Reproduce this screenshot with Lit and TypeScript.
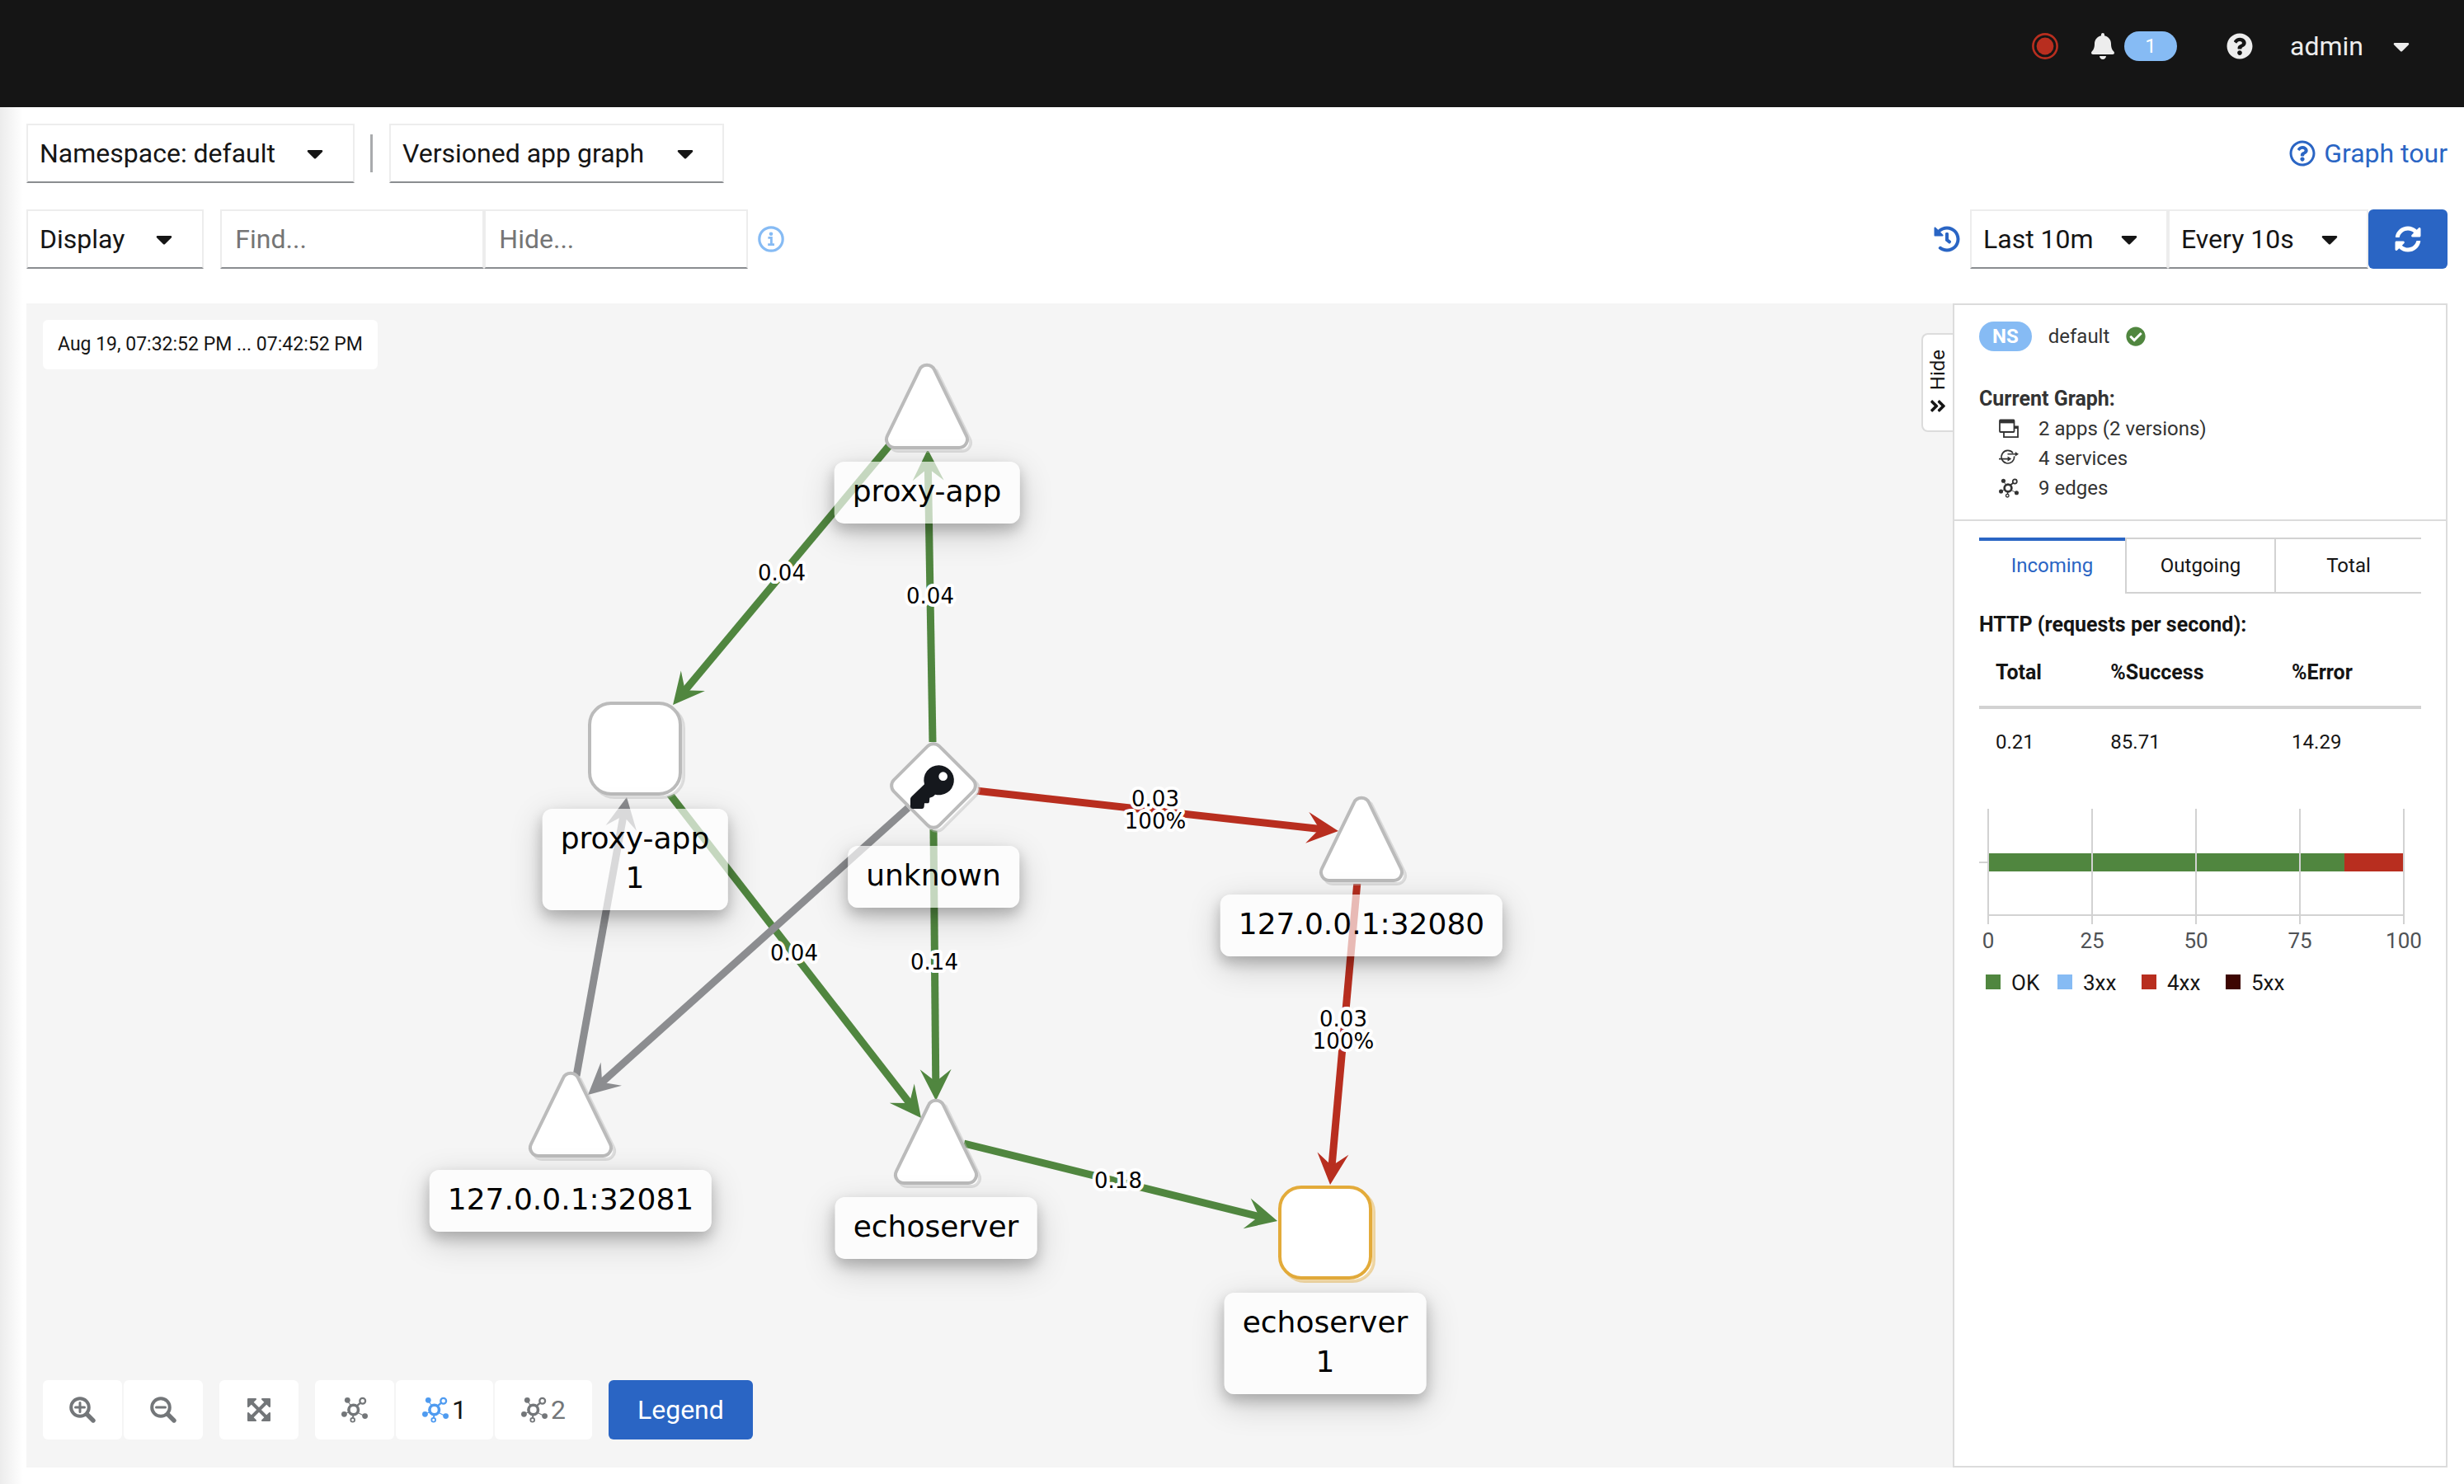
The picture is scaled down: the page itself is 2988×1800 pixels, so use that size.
import { LitElement, html, svg, css, nothing } from "lit";
import { customElement } from "lit/decorators.js";
import { styleMap } from "lit/directives/style-map.js";
import { classMap } from "lit/directives/class-map.js";

type Pt = [number, number];

const GREEN = "#50863f";
const RED = "#b82e1f";
const GRAY = "#8c8d90";

const CARET = "M31.3 192h257.3c17.8 0 26.7 21.5 14.1 34.1L174.1 354.8c-7.8 7.8-20.5 7.8-28.3 0L17.2 226.1C4.6 213.5 13.5 192 31.3 192z";
const BELL = "M224 512c35.32 0 63.97-28.65 63.97-64H160.03c0 35.35 28.65 64 63.97 64zm215.39-149.71c-19.32-20.76-55.47-51.99-55.47-154.29 0-77.7-54.48-139.9-127.94-155.16V32c0-17.67-14.32-32-31.98-32s-31.98 14.33-31.98 32v20.84C118.56 68.1 64.08 130.3 64.08 208c0 102.3-36.15 133.53-55.47 154.29-6 6.45-8.66 14.16-8.61 21.71.11 16.4 12.98 32 32.1 32h383.8c19.12 0 32-15.6 32.1-32 .05-7.55-2.61-15.27-8.61-21.71z";
const HELP = "M504 256c0 136.997-111.043 248-248 248S8 392.997 8 256C8 119.083 119.043 8 256 8s248 111.083 248 248zM262.655 90c-54.497 0-89.255 22.957-116.549 63.758-3.536 5.286-2.353 12.415 2.715 16.258l34.699 26.31c5.205 3.947 12.621 3.008 16.665-2.122 17.864-22.658 30.113-35.797 57.303-35.797 20.429 0 45.698 13.148 45.698 32.958 0 14.976-12.363 22.667-32.534 33.976C247.128 238.528 216 254.941 216 296v4c0 6.627 5.373 12 12 12h56c6.627 0 12-5.373 12-12v-1.333c0-28.462 83.186-29.647 83.186-106.667 0-58.002-60.165-102-116.531-102zM256 338c-25.365 0-46 20.635-46 46 0 25.364 20.635 46 46 46s46-20.636 46-46c0-25.365-20.635-46-46-46z";
const HELP_OUTLINE = "M256 8C119.043 8 8 119.083 8 256c0 136.997 111.043 248 248 248s248-111.003 248-248C504 119.083 392.957 8 256 8zm0 448c-110.532 0-200-89.431-200-200 0-110.495 89.472-200 200-200 110.491 0 200 89.471 200 200 0 110.53-89.431 200-200 200zm107.244-255.2c0 67.052-72.421 68.084-72.421 92.863V300c0 6.627-5.373 12-12 12h-45.647c-6.627 0-12-5.373-12-12v-8.659c0-35.745 27.1-50.034 47.579-61.516 17.561-9.845 28.324-16.541 28.324-29.579 0-17.246-21.999-28.693-39.784-28.693-23.189 0-33.894 10.977-48.942 29.969-4.057 5.12-11.46 6.071-16.666 2.124l-27.824-21.098c-5.107-3.872-6.251-11.066-2.644-16.363C184.846 131.491 214.94 112 261.794 112c49.071 0 101.45 38.304 101.45 88.8zM298 368c0 23.159-18.841 42-42 42s-42-18.841-42-42 18.841-42 42-42 42 18.841 42 42z";
const HISTORY = "M504 255.531c.253 136.64-111.18 248.372-247.82 248.468-59.015.042-113.223-20.53-155.822-54.911-11.077-8.94-11.905-25.541-1.839-35.607l11.267-11.267c8.609-8.609 22.353-9.551 31.891-1.984C173.062 425.135 212.781 440 256 440c101.705 0 184-82.311 184-184 0-101.705-82.311-184-184-184-48.814 0-93.149 18.969-126.068 49.932l50.754 50.754c10.08 10.08 2.941 27.314-11.313 27.314H24c-8.837 0-16-7.163-16-16V38.627c0-14.254 17.234-21.393 27.314-11.314l49.372 49.372C129.209 34.136 189.552 8 256 8c136.81 0 247.747 110.78 248 247.531zm-180.912 78.784l9.823-12.63c8.138-10.463 6.253-25.542-4.21-33.679L288 256.349V152c0-13.255-10.745-24-24-24h-16c-13.255 0-24 10.745-24 24v135.651l65.409 50.874c10.463 8.137 25.541 6.253 33.679-4.21z";
const SYNC = "M370.72 133.28C339.458 104.008 298.888 87.962 255.848 88c-77.458.068-144.328 53.178-162.791 126.85-1.344 5.363-6.122 9.15-11.651 9.15H24.103c-7.498 0-13.194-6.807-11.807-14.176C33.933 94.924 134.813 8 256 8c66.448 0 126.791 26.136 171.315 68.685L463.03 40.97C478.149 25.851 504 36.559 504 57.941V192c0 13.255-10.745 24-24 24H345.941c-21.382 0-32.09-25.851-16.971-40.971l41.75-41.749zM32 296h134.059c21.382 0 32.09 25.851 16.971 40.971l-41.75 41.75c31.262 29.273 71.835 45.319 114.876 45.28 77.418-.07 144.315-53.144 162.787-126.849 1.344-5.363 6.122-9.15 11.651-9.15h57.304c7.498 0 13.194 6.807 11.807 14.176C478.067 417.076 377.187 504 256 504c-66.448 0-126.791-26.136-171.315-68.685L48.97 471.03C33.851 486.149 8 475.441 8 454.059V320c0-13.255 10.745-24 24-24z";
const CHECK = "M504 256c0 136.967-111.033 248-248 248S8 392.967 8 256 119.033 8 256 8s248 111.033 248 248zM227.314 387.314l184-184c6.248-6.248 6.248-16.379 0-22.627l-22.627-22.627c-6.248-6.249-16.379-6.249-22.628 0L216 308.118l-70.059-70.059c-6.248-6.248-16.379-6.248-22.628 0l-22.627 22.627c-6.248 6.248-6.248 16.379 0 22.627l104 104c6.249 6.249 16.379 6.249 22.628.001z";
const DOUBLE_RIGHT = "M224.3 273l-136 136c-9.4 9.4-24.6 9.4-33.9 0l-22.6-22.6c-9.4-9.4-9.4-24.6 0-33.9l96.4-96.4-96.4-96.4c-9.4-9.4-9.4-24.6 0-33.9L54.3 103c9.4-9.4 24.6-9.4 33.9 0l136 136c9.5 9.4 9.5 24.6.1 34zm192-34l-136-136c-9.4-9.4-24.6-9.4-33.9 0l-22.6 22.6c-9.4 9.4-9.4 24.6 0 33.9l96.4 96.4-96.4 96.4c-9.4 9.4-9.4 24.6 0 33.9l22.6 22.6c9.4 9.4 24.6 9.4 33.9 0l136-136c9.4-9.2 9.4-24.4 0-33.8z";

const glyph = (d: string, w: number, px: number, h = 512) => html`
  <svg class="icon" aria-hidden="true" width=${px} height=${Math.round((px * h) / w)} viewBox="0 0 ${w} ${h}"><path d=${d} fill="currentColor" /></svg>`;

const caret = () => glyph(CARET, 320, 20);

const topology = (px: number) => html`
  <svg class="icon" aria-hidden="true" width=${px} height=${px} viewBox="0 0 32 32" fill="none" stroke="currentColor">
    <circle cx="14.7" cy="16" r="5.8" stroke-width="3.6" />
    <path d="M18.6 11.4 23.4 7.4" stroke-width="2.4" />
    <path d="M20 19.4 28 23.4M9.6 18.4 3.2 21.3M11.4 11 7.3 4.6" stroke-width="1.1" />
    <path d="M14.4 22 14 25.4" stroke-width="2" />
    <circle cx="25.7" cy="5.3" r="3.4" stroke-width="2.3" />
    <circle cx="13.7" cy="28.2" r="2.4" stroke-width="1.8" />
    <g fill="currentColor" stroke="none">
      <circle cx="7.3" cy="4.3" r="3.4" />
      <circle cx="3.4" cy="21.3" r="3.4" />
      <circle cx="28.6" cy="23.6" r="3.4" />
    </g>
  </svg>`;

const magnifier = (plus: boolean) => html`
  <svg class="icon" aria-hidden="true" width="32" height="32" viewBox="0 0 32 32" fill="none" stroke="currentColor">
    <circle cx="13" cy="13" r="10.8" stroke-width="4" />
    <path d="M21.5 21.5 29 29" stroke-width="5.4" stroke-linecap="round" />
    <path d=${plus ? "M7.5 13h11M13 7.5v11" : "M7.5 13h11"} stroke-width="3" stroke-linecap="round" />
  </svg>`;

const expand = html`
  <svg class="icon" aria-hidden="true" width="28" height="28" viewBox="0 0 28 28" fill="currentColor" stroke="currentColor">
    <path d="M4 4 24 24M24 4 4 24" fill="none" stroke-width="4" />
    <path d="M1 1h9L1 10zM27 1v9L18 1zM27 27h-9l9-9zM1 27v-9l9 9z" stroke-width="2" stroke-linejoin="round" />
  </svg>`;

const info = html`
  <svg class="icon" aria-hidden="true" width="32" height="32" viewBox="0 0 32 32" fill="none" stroke="currentColor">
    <circle cx="16" cy="16" r="14.2" stroke-width="3.2" />
    <circle cx="16" cy="9.8" r="2.3" fill="currentColor" stroke="none" />
    <path d="M12.4 14.4h4v8M12.2 22.6h7.8" stroke-width="2.8" />
  </svg>`;

const record = html`
  <svg class="icon" role="img" aria-label="Status" width="32" height="32" viewBox="0 0 32 32">
    <circle cx="16" cy="16" r="14.6" fill="none" stroke="#b82e1f" stroke-width="2.6" />
    <circle cx="16" cy="16" r="10.4" fill="#b82e1f" />
  </svg>`;

const appsIcon = html`
  <svg class="icon" aria-hidden="true" width="24" height="24" viewBox="0 0 24 24" fill="none" stroke="currentColor" stroke-width="1.8">
    <rect x="1" y="1.5" width="17.5" height="14.5" rx="1" />
    <path d="M1 3.4h17.5" stroke-width="4" />
    <path d="M6 16v6.2h17V9.4h-4.5M18.5 11h4.5" />
  </svg>`;

const serviceIcon = html`
  <svg class="icon" aria-hidden="true" width="24" height="24" viewBox="0 0 24 24" fill="none" stroke="currentColor" stroke-width="1.6">
    <path d="M17 5.4A7.8 7.8 0 1 0 18.6 9.4" />
    <path d="M0 12.6h11M10.5 6.8h10" />
    <path d="M10.6 9.4v6.4l4.6-3.2zM19.8 4v5.6l4.2-2.8z" fill="currentColor" stroke="none" />
  </svg>`;

/** Closed polygon path whose corners are rounded with arcs of radius r. */
function roundPoly(pts: Pt[], r: number): string {
  const n = pts.length;
  const out: string[] = [];
  pts.forEach((p, i) => {
    const a = pts[(i + n - 1) % n];
    const b = pts[(i + 1) % n];
    const la = Math.hypot(a[0] - p[0], a[1] - p[1]);
    const lb = Math.hypot(b[0] - p[0], b[1] - p[1]);
    const ua: Pt = [(a[0] - p[0]) / la, (a[1] - p[1]) / la];
    const ub: Pt = [(b[0] - p[0]) / lb, (b[1] - p[1]) / lb];
    const angle = Math.acos(ua[0] * ub[0] + ua[1] * ub[1]);
    const d = r / Math.tan(angle / 2);
    out.push(
      `${i ? "L" : "M"}${(p[0] + ua[0] * d).toFixed(1)} ${(p[1] + ua[1] * d).toFixed(1)}`,
      `A${r} ${r} 0 0 1 ${(p[0] + ub[0] * d).toFixed(1)} ${(p[1] + ub[1] * d).toFixed(1)}`,
    );
  });
  return out.join("") + "Z";
}

const triangle = roundPoly([[0, -57], [55, 56], [-55, 56]], 10);
const diamond = roundPoly([[0, -55], [55, 0], [0, 55], [-55, 0]], 10);
const square = roundPoly([[-55, -55], [55, -55], [55, 55], [-55, 55]], 26);

interface GraphNode {
  shape: string;
  at: Pt;
  label: string[];
  labelTop: number;
  accent?: boolean;
  key?: boolean;
}

const NODES: GraphNode[] = [
  { shape: triangle, at: [1092, 119], label: ["proxy-app"], labelTop: 192 },
  { shape: square, at: [738, 540], label: ["proxy-app", "1"], labelTop: 613 },
  { shape: diamond, at: [1100, 585], label: ["unknown"], labelTop: 658, key: true },
  { shape: triangle, at: [1619, 644], label: ["127.0.0.1:32080"], labelTop: 717 },
  { shape: triangle, at: [660, 978], label: ["127.0.0.1:32081"], labelTop: 1051 },
  { shape: triangle, at: [1103, 1011], label: ["echoserver"], labelTop: 1084 },
  { shape: square, at: [1575, 1127], label: ["echoserver", "1"], labelTop: 1200, accent: true },
];

interface Edge {
  from: Pt;
  to: Pt;
  color: string;
  label?: string[];
  at?: Pt;
}

const EDGES: Edge[] = [
  { from: [1046, 173], to: [784, 487], color: GREEN, label: ["0.04"], at: [916, 336] },
  { from: [1099, 532], to: [1093, 177], color: GREEN, label: ["0.04"], at: [1096, 364] },
  { from: [1151, 591], to: [1591, 640], color: RED, label: ["0.03", "100%"], at: [1369, 610] },
  { from: [1614, 701], to: [1581, 1069], color: RED, label: ["0.03", "100%"], at: [1597, 877] },
  { from: [667, 937], to: [728, 599], color: GRAY },
  { from: [780, 595], to: [1085, 988], color: GREEN, label: ["0.04"], at: [931, 797] },
  { from: [1100, 638], to: [1103, 967], color: GREEN, label: ["0.14"], at: [1101, 808] },
  { from: [1069, 612], to: [681, 960], color: GRAY },
  { from: [1137, 1019], to: [1517, 1113], color: GREEN, label: ["0.18"], at: [1324, 1073] },
];

function drawEdge(e: Edge) {
  const dx = e.to[0] - e.from[0];
  const dy = e.to[1] - e.from[1];
  const len = Math.hypot(dx, dy);
  const angle = (Math.atan2(dy, dx) * 180) / Math.PI;
  return svg`
    <g transform="translate(${e.from[0]} ${e.from[1]}) rotate(${angle.toFixed(2)})">
      <path d="M0 0H${(len - 20).toFixed(1)}" stroke=${e.color} stroke-width="9" />
      <path d="M${len.toFixed(1)} 0l-38 -19l15 19l-15 19z" fill=${e.color} />
    </g>`;
}

function drawNode(n: GraphNode) {
  const line = n.accent ? "#e3ab3a" : "#bbbbbb";
  return svg`
    <g transform="translate(${n.at[0]} ${n.at[1]})">
      <path d=${n.shape} transform="translate(4 4)" fill="#ffffff" stroke=${line} stroke-opacity="0.45" stroke-width="4" />
      <path d=${n.shape} fill="#ffffff" stroke=${line} stroke-width="4" />
      ${n.key
        ? svg`<g transform="translate(-132 -73) scale(.3333)" fill="#15181d">
            <path fill-rule="evenodd" d="M416 145a54 54 0 1 1-14 106c-4 6-10 10-20 12l-1 12c0 5-2 8-8 8h-10l-1 12c-1 6-3 8-8 8h-32c-7 0-10-3-10-9v-24c0-6 1-8 5-12l46-44A54 54 0 0 1 416 145zm15 24a16 16 0 1 0 0 32a16 16 0 0 0 0-32z" />
          </g>`
        : nothing}
    </g>`;
}

const TICKS = [0, 25, 50, 75, 100];
const SERIES: { name: string; color: string; x: number; value: number }[] = [
  { name: "OK", color: GREEN, x: 8, value: 85.71 },
  { name: "3xx", color: "#86bbf4", x: 95, value: 0 },
  { name: "4xx", color: RED, x: 197, value: 14.29 },
  { name: "5xx", color: "#3d0602", x: 299, value: 0 },
];

@customElement("traffic-graph")
export class TrafficGraph extends LitElement {
  static styles = css`
    :host { display: block; position: absolute; inset: 0; overflow: hidden; font-family: "DejaVu Sans", Verdana, sans-serif; color: #000; }
    .layer { position: absolute; inset: 0; width: 100%; height: 100%; }
    .edge-label { font-size: 26px; text-anchor: middle; stroke: #fff; stroke-width: 8px; stroke-linejoin: round; paint-order: stroke; }
    .label {
      position: absolute; transform: translateX(-50%); box-sizing: border-box; padding: 12px 22px 15px;
      border-radius: 12px; background: rgba(255, 255, 255, 0.67); font-size: 36px; line-height: 48px; text-align: center; white-space: nowrap;
      box-shadow: 0 8px 16px rgba(0, 0, 0, 0.2), 0 12px 40px rgba(0, 0, 0, 0.19);
    }
    .line { display: block; }
  `;

  render() {
    return html`
      <svg class="layer" role="img" aria-label="Service graph">
        ${EDGES.map(drawEdge)}${NODES.map(drawNode)}
      </svg>
      ${NODES.map(n => html`
        <div class="label" style=${styleMap({ left: `${n.at[0]}px`, top: `${n.labelTop}px` })}>
          ${n.label.map(t => html`<span class="line">${t}</span>`)}
        </div>`)}
      <svg class="layer">
        ${EDGES.map(e => (e.label ?? []).map((t, i) => svg`<text class="edge-label" x=${e.at![0]} y=${e.at![1] + i * 27}>${t}</text>`))}
      </svg>`;
  }
}

@customElement("traffic-summary")
export class TrafficSummary extends LitElement {
  static styles = css`
    :host { display: flex; flex-direction: column; box-sizing: border-box; width: 600px; flex: none; border: 2px solid #dcdcdc; background: #fff; font-size: 24px; line-height: 36px; color: #151515; }
    .icon { display: block; flex: none; }
    .overview { padding: 20px 30px; border-bottom: 2px solid #dcdcdc; color: #333; }
    .namespace { display: flex; align-items: center; gap: 20px; margin-bottom: 40px; }
    .badge { padding: 0 16px; border-radius: 18px; background: #86bbf4; color: #fff; font-weight: 700; }
    .ok { color: #50863f; }
    .title { margin: 0; font-size: 25px; font-weight: 700; line-height: 36px; }
    .facts { margin: 0; padding: 0 0 0 24px; list-style: none; }
    .fact { display: flex; align-items: center; gap: 24px; }
    .details { padding: 20px 30px; }
    .tabs { display: grid; grid-template-columns: 177fr 181fr 178fr; margin-bottom: 20px; }
    .tab { box-sizing: border-box; height: 68px; padding: 0; border: 0 solid #d2d2d2; border-width: 2px 0 2px 2px; background: #fff; color: #151515; font: inherit; }
    .tab.selected { padding-bottom: 4px; border-width: 4px 0 0; border-top-color: #2a65c4; color: #2a65c4; }
    .rates { width: 100%; border-collapse: collapse; table-layout: fixed; margin-bottom: 40px; }
    .rates th, .rates td { box-sizing: border-box; padding: 22px 20px; text-align: left; line-height: 36px; }
    .rates thead th { border-bottom: 4px solid #d2d2d2; font-size: 25px; }
    .c1 { width: 26%; }
    .c2 { width: 41%; }
    .chart { display: block; width: 100%; font-size: 26px; fill: #4f5255; }
    .tick { text-anchor: middle; }
    .key { fill: #151515; }
  `;

  render() {
    let x = 11;
    const bars = SERIES.map(s => {
      const w = s.value * 5.04;
      const bar = svg`<rect x=${x} y="55" width=${w} height="22" fill=${s.color} />`;
      x += w;
      return bar;
    });
    return html`
      <section class="overview">
        <div class="namespace"><span class="badge">NS</span><span>default</span><span class="ok">${glyph(CHECK, 512, 24)}</span></div>
        <h2 class="title">Current Graph:</h2>
        <ul class="facts">
          <li class="fact">${appsIcon}<span>2 apps (2 versions)</span></li>
          <li class="fact">${serviceIcon}<span>4 services</span></li>
          <li class="fact">${topology(24)}<span>9 edges</span></li>
        </ul>
      </section>
      <section class="details">
        <div class="tabs" role="tablist">
          ${["Incoming", "Outgoing", "Total"].map((t, i) => html`
            <button role="tab" aria-selected=${i === 0 ? "true" : "false"} class=${classMap({ tab: true, selected: i === 0 })}>${t}</button>`)}
        </div>
        <h2 class="title">HTTP (requests per second):</h2>
        <table class="rates">
          <thead><tr><th class="c1">Total</th><th class="c2">%Success</th><th>%Error</th></tr></thead>
          <tbody><tr><td>0.21</td><td>85.71</td><td>14.29</td></tr></tbody>
        </table>
        <svg class="chart" viewBox="0 0 536 240" role="img" aria-label="Requests by status">
          ${bars}
          <path d="M0 66H11M11 130H515" stroke="#d2d2d2" stroke-width="2" />
          ${TICKS.map(t => svg`
            <path d="M${11 + t * 5.04} 1V141" stroke="#d2d2d2" stroke-width="2" />
            <text class="tick" x=${11 + t * 5.04} y="170">${t}</text>`)}
          ${SERIES.map(s => svg`
            <rect x=${s.x} y="202" width="18" height="18" fill=${s.color} />
            <text class="key" x=${s.x + 31} y="221">${s.name}</text>`)}
        </svg>
      </section>`;
  }
}

@customElement("app-root")
export class AppRoot extends LitElement {
  static styles = css`
    :host { display: flex; flex-direction: column; min-height: 100vh; box-sizing: border-box; background: #fff; color: #151515; font-family: Roboto, "Liberation Sans", sans-serif; font-size: 32px; line-height: 48px; }
    .icon { display: block; flex: none; }
    .masthead { display: flex; align-items: center; justify-content: flex-end; box-sizing: border-box; height: 130px; padding: 0 66px 18px 32px; background: #151515; color: #ededed; }
    .plain { display: flex; align-items: center; padding: 0; border: 0; background: none; color: inherit; font: inherit; }
    .alerts { gap: 12px; margin: 0 60px 0 40px; }
    .count { width: 64px; border-radius: 18px; background: #86bbf4; color: #fff; font-size: 24px; line-height: 36px; text-align: center; }
    .user { gap: 36px; margin-left: 45px; }
    .page { flex: 1; display: flex; flex-direction: column; padding: 20px 20px 20px 32px; background: linear-gradient(to right, #ececec, #fff 28px); }
    .toolbar { display: flex; align-items: center; margin-bottom: 32px; }
    .toolbar.second { margin-bottom: 42px; }
    .push { flex: 1; }
    .control { display: flex; align-items: center; box-sizing: border-box; height: 72px; border: 2px solid #ededed; border-bottom-color: #8a8d90; background: #fff; color: #151515; font: inherit; }
    .toggle { gap: 38px; padding: 0 36px 0 14px; }
    .picker { display: grid; align-items: center; }
    .picker > * { grid-area: 1 / 1; }
    .picker > .icon { justify-self: end; margin-right: 37px; pointer-events: none; }
    .select { appearance: none; width: 100%; padding: 0 94px 0 14px; }
    .compact .select { padding-right: 88px; }
    .separator { width: 3px; height: 46px; margin: 0 20px 0 19px; background: #a9abad; }
    .field { width: 320px; padding: 0 16px; border-radius: 0; }
    .field::placeholder { color: #757575; opacity: 1; }
    .find { margin-left: 20px; }
    .hint { margin-left: 12px; color: #86bbf4; }
    .tour { display: flex; align-items: center; gap: 10px; color: #2a65c4; text-decoration: none; }
    .replay { margin-right: 12px; color: #2a65c4; }
    .primary { display: flex; align-items: center; justify-content: center; height: 72px; padding: 0 32px; border: 0; border-radius: 6px; background: #2a65c4; color: #fff; font: inherit; }
    .legend { padding: 0 35px; }
    .workspace { flex: 1; display: flex; background: #f5f5f5; }
    .canvas { position: relative; flex: 1; display: flex; flex-direction: column; justify-content: space-between; align-items: flex-start; padding: 20px 0 34px 20px; }
    .range { position: relative; padding: 12px 18px; border-radius: 6px; background: #fff; font-size: 23px; line-height: 36px; }
    .tools { position: relative; display: flex; gap: 20px; }
    .group { display: flex; gap: 2px; }
    .tool { display: flex; align-items: center; justify-content: center; gap: 4px; min-width: 96px; height: 72px; padding: 0 32px; border: 0; border-radius: 6px; background: #fff; color: #737679; font: inherit; }
    .tool.active { color: #151515; }
    .tool.active .icon { color: #4f9bf0; }
    .collapse { position: absolute; top: 36px; right: 0; display: flex; flex-direction: column; align-items: center; justify-content: center; gap: 8px; box-sizing: border-box; width: 38px; height: 120px; padding: 0; border: 2px solid #dcdcdc; border-right: 0; border-radius: 8px 0 0 8px; background: #fff; color: #151515; font: inherit; font-size: 24px; line-height: 32px; }
    .vertical { writing-mode: vertical-rl; transform: rotate(180deg); }
  `;

  private picker(label: string, value: string, others: string[], compact = false) {
    return html`
      <label class=${classMap({ picker: true, compact })}>
        <select class="control select" aria-label=${label}>
          <option selected>${value}</option>
          ${others.map(o => html`<option>${o}</option>`)}
        </select>
        ${caret()}
      </label>`;
  }

  render() {
    return html`
      <header class="masthead">
        ${record}
        <button class="plain alerts" aria-label="Notifications">${glyph(BELL, 448, 28)}<span class="count">1</span></button>
        <button class="plain" aria-label="Help">${glyph(HELP, 512, 32)}</button>
        <button class="plain user"><span>admin</span>${caret()}</button>
      </header>
      <main class="page">
        <div class="toolbar">
          <button class="control toggle" aria-haspopup="true"><span>Namespace: default</span>${caret()}</button>
          <span class="separator"></span>
          ${this.picker("Graph type", "Versioned app graph", ["App graph", "Service graph"])}
          <span class="push"></span>
          <a class="tour" href="#tour">${glyph(HELP_OUTLINE, 512, 32)}<span>Graph tour</span></a>
        </div>
        <div class="toolbar second">
          <button class="control toggle" aria-haspopup="true"><span>Display</span>${caret()}</button>
          <input class="control field find" type="text" aria-label="Find" placeholder="Find..." />
          <input class="control field" type="text" aria-label="Hide" placeholder="Hide..." />
          <button class="plain hint" aria-label="Find and hide help">${info}</button>
          <span class="push"></span>
          <button class="plain replay" aria-label="Replay">${glyph(HISTORY, 512, 32)}</button>
          ${this.picker("Duration", "Last 10m", ["Last 1m", "Last 5m"], true)}
          ${this.picker("Refresh interval", "Every 10s", ["Every 5s", "Pause"], true)}
          <button class="primary" aria-label="Refresh">${glyph(SYNC, 512, 32)}</button>
        </div>
        <div class="workspace">
          <div class="canvas">
            <traffic-graph></traffic-graph>
            <div class="range">Aug 19, 07:32:52 PM ... 07:42:52 PM</div>
            <div class="tools">
              <div class="group">
                <button class="tool" aria-label="Zoom in">${magnifier(true)}</button>
                <button class="tool" aria-label="Zoom out">${magnifier(false)}</button>
              </div>
              <button class="tool" aria-label="Fit to screen">${expand}</button>
              <div class="group">
                <button class="tool" aria-label="Default layout">${topology(32)}</button>
                <button class="tool active">${topology(32)}<span>1</span></button>
                <button class="tool">${topology(32)}<span>2</span></button>
              </div>
              <button class="primary legend">Legend</button>
            </div>
            <button class="collapse"><span class="vertical">Hide</span>${glyph(DOUBLE_RIGHT, 448, 20)}</button>
          </div>
          <traffic-summary></traffic-summary>
        </div>
      </main>`;
  }
}
